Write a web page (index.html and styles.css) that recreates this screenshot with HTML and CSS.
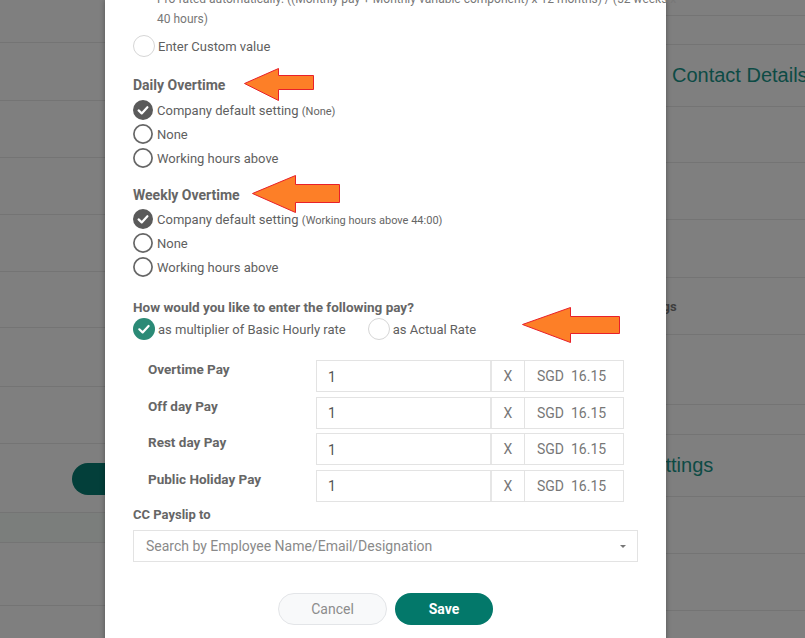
FILE: index.html
```html
<!DOCTYPE html>
<html>
<head>
<meta charset="utf-8">
<link rel="stylesheet" href="styles.css">
</head>
<body>
<div class="bg">
  <div class="bg-left">
    <div class="brow h43"></div>
    <div class="brow h58"></div>
    <div class="brow h57"></div>
    <div class="brow h57"></div>
    <div class="brow h57"></div>
    <div class="brow h56"></div>
    <div class="brow h59"></div>
    <div class="brow h57"></div>
    <div class="brow h69 pill-row"><div class="bg-pill"></div></div>
    <div class="brow h30 tint"></div>
    <div class="brow h63"></div>
    <div class="brow last"></div>
  </div>
  <div class="bg-mid"></div>
  <div class="bg-right">
    <div class="brow h16"></div>
    <div class="brow h29"></div>
    <div class="brow h62 big-text pad-contact">Contact Details</div>
    <div class="brow h56"></div>
    <div class="brow h57"></div>
    <div class="brow h58"></div>
    <div class="brow h57 small-text pad-settings">Settings</div>
    <div class="brow h70"></div>
    <div class="brow h30"></div>
    <div class="brow h62 big-text pad-settings2">Settings</div>
    <div class="brow h57"></div>
    <div class="brow h57"></div>
    <div class="brow last"></div>
  </div>
</div>

<div class="modal">
  <div class="modal-body">
    <div class="note">Pro-rated automatically: ((Monthly pay + Monthly variable component) x 12 months) / (52 weeks x<br>40 hours)</div>

    <div class="opt opt-custom">
      <span class="radio-light"></span>
      <span>Enter Custom value</span>
    </div>

    <div class="heading h-daily">Daily Overtime</div>
    <div class="opt">
      <svg class="rad" width="20" height="20" viewBox="0 0 20 20"><circle cx="10" cy="10" r="10" fill="#5a5a5a"/><path d="M5.6 10.4 L8.7 13.4 L14.4 7.2" fill="none" stroke="#fff" stroke-width="2.2" stroke-linecap="round" stroke-linejoin="round"/></svg>
      <span>Company default setting <small>(None)</small></span>
    </div>
    <div class="opt">
      <svg class="rad" width="20" height="20" viewBox="0 0 20 20"><circle cx="10" cy="10" r="9.1" fill="none" stroke="#666" stroke-width="1.7"/></svg>
      <span>None</span>
    </div>
    <div class="opt">
      <svg class="rad" width="20" height="20" viewBox="0 0 20 20"><circle cx="10" cy="10" r="9.1" fill="none" stroke="#666" stroke-width="1.7"/></svg>
      <span>Working hours above</span>
    </div>

    <div class="heading h-weekly">Weekly Overtime</div>
    <div class="opt">
      <svg class="rad" width="20" height="20" viewBox="0 0 20 20"><circle cx="10" cy="10" r="10" fill="#5a5a5a"/><path d="M5.6 10.4 L8.7 13.4 L14.4 7.2" fill="none" stroke="#fff" stroke-width="2.2" stroke-linecap="round" stroke-linejoin="round"/></svg>
      <span>Company default setting <small>(Working hours above 44:00)</small></span>
    </div>
    <div class="opt">
      <svg class="rad" width="20" height="20" viewBox="0 0 20 20"><circle cx="10" cy="10" r="9.1" fill="none" stroke="#666" stroke-width="1.7"/></svg>
      <span>None</span>
    </div>
    <div class="opt">
      <svg class="rad" width="20" height="20" viewBox="0 0 20 20"><circle cx="10" cy="10" r="9.1" fill="none" stroke="#666" stroke-width="1.7"/></svg>
      <span>Working hours above</span>
    </div>

    <div class="heading h-pay">How would you like to enter the following pay?</div>
    <div class="opt opt-pay">
      <svg class="rad-lg" width="22" height="22" viewBox="0 0 22 22"><circle cx="11" cy="11" r="11" fill="#2b8a76"/><path d="M6.3 11.3 L9.6 14.4 L15.6 8" fill="none" stroke="#fff" stroke-width="2.2" stroke-linecap="round" stroke-linejoin="round"/></svg>
      <span class="opt-text">as multiplier of Basic Hourly rate</span>
      <span class="radio-light second"></span>
      <span class="opt-text">as Actual Rate</span>
    </div>

    <div class="pay-table">
      <div class="pay-row">
        <div class="pay-label">Overtime Pay</div>
        <div class="group"><div class="g-input">1</div><div class="g-x">X</div><div class="g-rate">SGD&nbsp;&nbsp;16.15</div></div>
      </div>
      <div class="pay-row">
        <div class="pay-label">Off day Pay</div>
        <div class="group"><div class="g-input">1</div><div class="g-x">X</div><div class="g-rate">SGD&nbsp;&nbsp;16.15</div></div>
      </div>
      <div class="pay-row">
        <div class="pay-label">Rest day Pay</div>
        <div class="group"><div class="g-input">1</div><div class="g-x">X</div><div class="g-rate">SGD&nbsp;&nbsp;16.15</div></div>
      </div>
      <div class="pay-row">
        <div class="pay-label">Public Holiday Pay</div>
        <div class="group"><div class="g-input">1</div><div class="g-x">X</div><div class="g-rate">SGD&nbsp;&nbsp;16.15</div></div>
      </div>
    </div>

    <div class="heading h-cc">CC Payslip to</div>
    <div class="select">
      <span>Search by Employee Name/Email/Designation</span>
      <span class="caret"></span>
    </div>

    <div class="actions">
      <button class="btn btn-cancel">Cancel</button>
      <button class="btn btn-save">Save</button>
    </div>
  </div>

  <svg class="arrow arrow1" width="71" height="34" viewBox="0 0 71 34"><polygon points="0.5,15.5 34.5,0.5 34.5,7.5 69.5,7.5 69.5,21.5 34.5,21.5 34.5,32.5" fill="#fd7f27" stroke="#e8202a" stroke-width="1"/></svg>
  <svg class="arrow arrow2" width="89" height="39" viewBox="0 0 89 39"><polygon points="0.5,18.5 43.5,0.5 43.5,9.5 87.5,9.5 87.5,27.5 43.5,27.5 43.5,37.5" fill="#fd7f27" stroke="#e8202a" stroke-width="1"/></svg>
  <svg class="arrow arrow3" width="99" height="37" viewBox="0 0 99 37"><polygon points="0.5,17.5 48.5,0.5 48.5,9.5 97.5,9.5 97.5,26.5 48.5,26.5 48.5,35.5" fill="#fd7f27" stroke="#e8202a" stroke-width="1"/></svg>
</div>
</body>
</html>
```

FILE: styles.css
```css
* { box-sizing: border-box; }

html, body {
  margin: 0;
  padding: 0;
}

body {
  width: 805px;
  height: 638px;
  overflow: hidden;
  position: relative;
  background: #7f7f7f;
  font-family: Roboto, "Liberation Sans", Arial, sans-serif;
}

/* background page (under overlay) */
.bg {
  display: flex;
  height: 638px;
}
.bg-left {
  width: 105px;
  display: flex;
  flex-direction: column;
}
.bg-mid { flex: 1; }
.bg-right {
  width: 245px;
  display: flex;
  flex-direction: column;
  white-space: nowrap;
  overflow: hidden;
}
.brow {
  border-bottom: 1px solid #747474;
  display: flex;
  align-items: center;
  flex-shrink: 0;
}
.brow.last { flex: 1; border-bottom: 0; }
.h16 { height: 16px; }
.h29 { height: 29px; }
.h30 { height: 30px; }
.h43 { height: 43px; }
.h56 { height: 56px; }
.h57 { height: 57px; }
.h58 { height: 58px; }
.h59 { height: 59px; }
.h62 { height: 62px; }
.h63 { height: 63px; }
.h69 { height: 69px; }
.h70 { height: 70px; }
.tint { background: #7b7e7c; }
.pill-row { align-items: flex-start; padding-top: 19px; }
.bg-pill {
  margin-left: 72px;
  width: 120px;
  height: 32px;
  border-radius: 16px;
  background: #033f3a;
  flex-shrink: 0;
}
.big-text {
  font-family: "Liberation Sans", Arial, sans-serif;
  font-size: 20px;
  color: #0d4b45;
}
.small-text {
  font-size: 13px;
  font-weight: 700;
  color: #3e3e3e;
}
.pad-contact { padding-left: 112px; }
.pad-settings { padding-left: 68px; }
.pad-settings2 { padding-left: 81px; }

/* modal */
.modal {
  position: absolute;
  left: 105px;
  top: 0;
  width: 561px;
  height: 660px;
  background: #fff;
  box-shadow: 0 0 5px rgba(0, 0, 0, 0.35);
}
.modal-body {
  padding: 0 28px;
  color: #666;
}
.note {
  margin-top: -10px;
  padding-left: 24px;
  font-size: 12px;
  line-height: 19.5px;
  color: #777;
  white-space: nowrap;
}

.opt {
  display: flex;
  align-items: center;
  height: 24px;
  font-size: 13px;
  color: #5f5f5f;
  white-space: nowrap;
}
.opt small {
  font-size: 11px;
  color: #666;
}
.rad { margin-right: 4px; flex-shrink: 0; }
.rad-lg { margin-right: 3px; flex-shrink: 0; }
.radio-light {
  width: 22px;
  height: 22px;
  border: 1px solid #d6d6d6;
  border-radius: 50%;
  margin-right: 3px;
  flex-shrink: 0;
}
.radio-light.second { margin-left: 22px; }
.opt-custom { margin-top: 5px; }

.heading {
  font-size: 13px;
  font-weight: 700;
  line-height: 20px;
  color: #666;
  white-space: nowrap;
}
.h-daily { font-size: 14px; margin-top: 17px; margin-bottom: 3px; }
.h-weekly { font-size: 14px; margin-top: 15px; margin-bottom: 2px; }
.h-pay { font-size: 13.5px; margin-top: 18px; margin-bottom: 0; }

.pay-table {
  margin-top: 19px;
  display: flex;
  flex-direction: column;
  gap: 4.5px;
}
.pay-row {
  display: flex;
  align-items: flex-start;
}
.pay-label {
  width: 183px;
  padding-left: 15px;
  font-size: 13.5px;
  font-weight: 700;
  line-height: 16px;
  color: #666;
  padding-top: 1px;
}
.group {
  display: flex;
  width: 308px;
  height: 32px;
  border: 1px solid #e3e3e3;
  font-size: 14px;
  color: #777;
}
.g-input {
  width: 175px;
  padding-left: 11px;
  display: flex;
  align-items: center;
  padding-top: 1px;
  color: #555;
  border-right: 2px solid #e6e6e6;
}
.g-x {
  width: 33px;
  display: flex;
  align-items: center;
  justify-content: center;
  border-right: 1px solid #e3e3e3;
}
.g-rate {
  flex: 1;
  display: flex;
  align-items: center;
  padding-left: 12px;
}

.h-cc { margin-top: 3px; }
.select {
  margin-top: 5px;
  width: 505px;
  height: 32px;
  border: 1px solid #e3e3e3;
  display: flex;
  align-items: center;
  justify-content: space-between;
  padding: 1px 11px 0 12px;
  font-size: 14px;
  color: #8a8a8a;
}
.caret {
  width: 0;
  height: 0;
  border-left: 3.5px solid transparent;
  border-right: 3.5px solid transparent;
  border-top: 3.5px solid #777;
}

.actions {
  margin-top: 31px;
  display: flex;
  justify-content: center;
  gap: 8px;
  width: 505px;
}
.btn {
  height: 32px;
  border-radius: 16px;
  font-family: Roboto, "Liberation Sans", Arial, sans-serif;
  font-size: 14px;
  padding: 0;
}
.btn-cancel {
  width: 109px;
  background: #f8f9fa;
  border: 1px solid #e3e5e8;
  color: #8c8c8c;
}
.btn-save {
  width: 98px;
  background: #03786a;
  border: 0;
  color: #fff;
  font-weight: 700;
}

.arrow { position: absolute; }
.arrow1 { left: 139px; top: 68px; }
.arrow2 { left: 147px; top: 175px; }
.arrow3 { left: 417px; top: 307px; }
```
